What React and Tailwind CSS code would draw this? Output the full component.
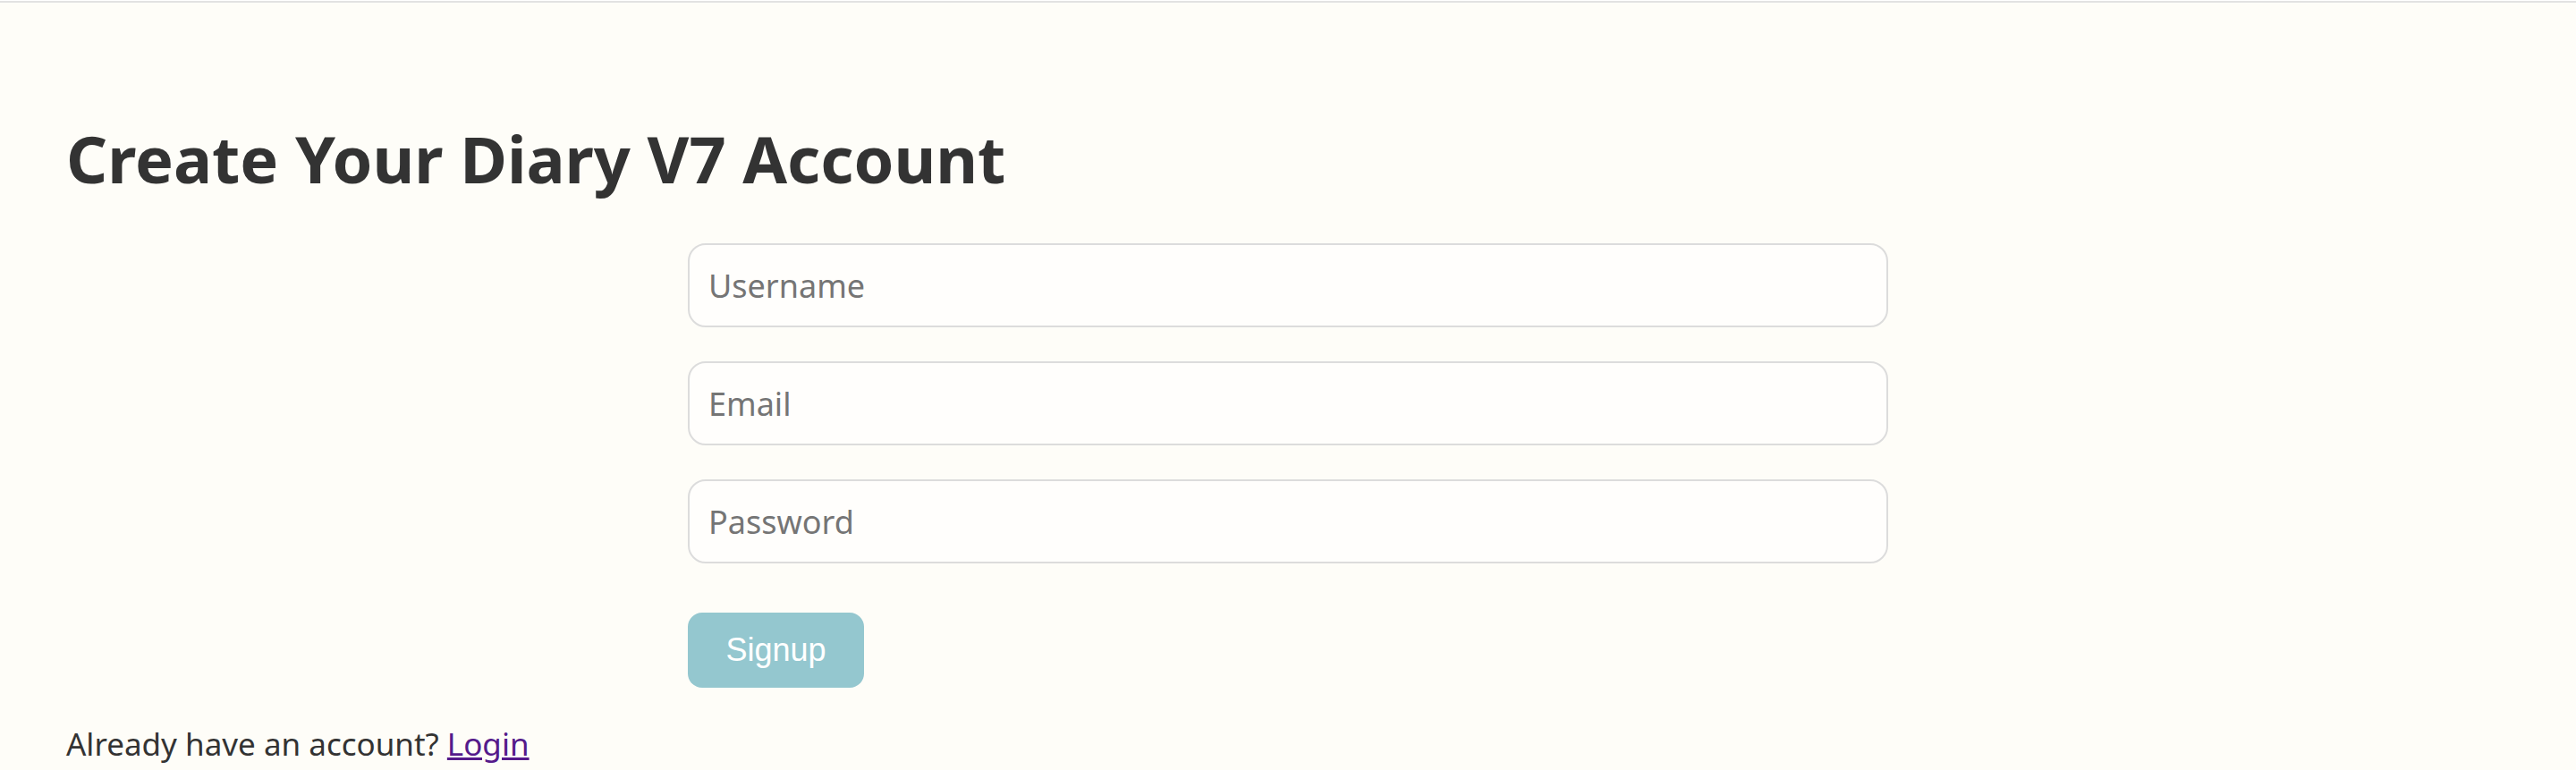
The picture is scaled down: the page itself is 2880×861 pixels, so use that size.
import React, { useState } from 'react';

const comic = "font-['Comic_Sans_MS','Noto_Sans',sans-serif]";

const SignupPage = () => {
  const [form, setForm] = useState({ username: '', email: '', password: '' });

  // 更新表单字段
  const handleChange = (e) => {
    setForm({ ...form, [e.target.name]: e.target.value });
  };

  const inputClass =
    "w-full h-[94px] px-[21px] rounded-[20px] border-2 border-[#dcdcdc] bg-[#fffefc] text-[36px] text-[#333] placeholder:text-[#757575] outline-none " +
    comic;

  return (
    <div className={`min-h-screen bg-[#fefdf8] text-[#333] ${comic}`}>
      <div className="h-[2px] mt-px bg-[#e2e2e2]"></div>

      <div className="px-[74px]">
        {/* 页面标题 */}
        <h1 className="mt-[131px] text-[72px] leading-[1.2] font-bold text-[#333]">
          Create Your Diary V7 Account
        </h1>

        {/* 注册表单 */}
        <form
          className="w-[1342px] mx-auto mt-[52px] flex flex-col gap-[38px]"
          onSubmit={(e) => e.preventDefault()}
        >
          <input
            name="username"
            type="text"
            placeholder="Username"
            value={form.username}
            onChange={handleChange}
            className={inputClass}
          />
          <input
            name="email"
            type="email"
            placeholder="Email"
            value={form.email}
            onChange={handleChange}
            className={inputClass}
          />
          <input
            name="password"
            type="password"
            placeholder="Password"
            value={form.password}
            onChange={handleChange}
            className={inputClass}
          />
          <div className="mt-[17px]">
            <button
              type="submit"
              className="w-[197px] h-[84px] rounded-[16px] bg-[#94c7cf] text-white text-[36px] font-['Liberation_Sans',Arial,sans-serif]"
            >
              Signup
            </button>
          </div>
        </form>

        {/* 登录链接 */}
        <p className="mt-[42px] text-[35px] leading-[1.2]">
          Already have an account?{' '}
          <a href="#login" className="text-[#551a8b] underline">
            Login
          </a>
        </p>
      </div>
    </div>
  );
};

export default SignupPage;
